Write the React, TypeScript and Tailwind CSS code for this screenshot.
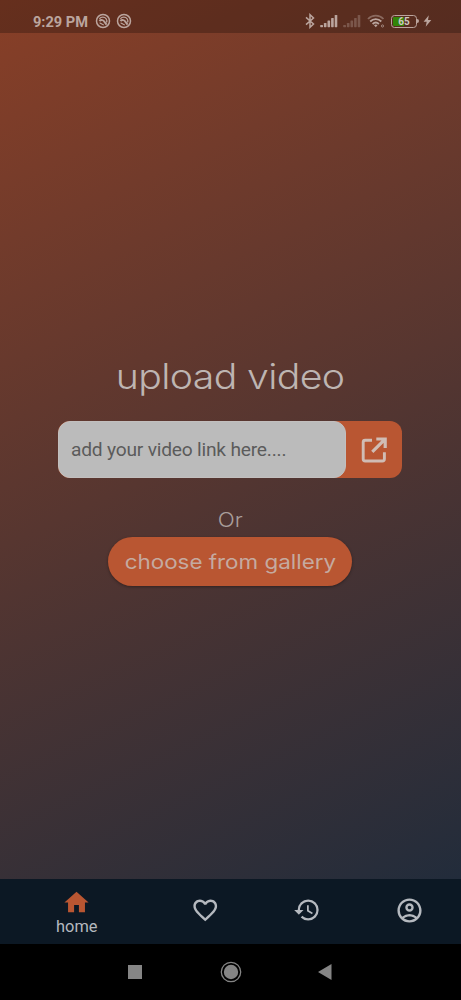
import React from "react";
import { MdHome, MdFavoriteBorder, MdHistory, MdOutlineAccountCircle } from "react-icons/md";

function NotificationIcon() {
  return (
    <svg viewBox="0 0 16 16" className="size-4" fill="none" stroke="currentColor">
      <circle cx="8" cy="8" r="6.5" strokeWidth="1.5" />
      <path d="M4.4 5.8C6 3.6 9.6 3.6 11.2 5.8C12 7 12 8.4 11.5 9.6" strokeWidth="1.2" />
      <path d="M4.4 8C6 6.4 8.6 7 9.4 8.8L11.6 11.6" strokeWidth="2" />
      <path d="M4.6 10.2C5.8 9.6 6.6 11.6 8.8 11.8" strokeWidth="1.2" />
    </svg>
  );
}

function Signal({ faded = false }: { faded?: boolean }) {
  return (
    <svg viewBox="0 0 18 14" className={faded ? "h-3.5 w-[18px] opacity-35" : "h-3.5 w-[18px]"} fill="currentColor">
      <rect x="0.2" y="11" width="2.8" height="2.2" rx="0.6" />
      <rect x="3.9" y="9" width="2.6" height="4.2" rx="0.6" />
      <rect x="7.5" y="6.5" width="2.6" height="6.7" rx="0.6" />
      <rect x="11.1" y="4" width="2.6" height="9.2" rx="0.6" />
      <rect x="14.7" y="1" width="2.6" height="12.2" rx="0.6" />
    </svg>
  );
}

function OpenLinkIcon() {
  return (
    <svg viewBox="0 0 28 28" className="size-7" fill="none" stroke="currentColor">
      <path d="M12 4.2H5.2Q3.2 4.2 3.2 6.2V23Q3.2 25 5.2 25H22.4Q24.4 25 24.4 23V16.2" strokeWidth="2.9" />
      <path d="M16.3 3H25.2V12M24.6 3.6L12.3 15.9" strokeWidth="3.2" />
    </svg>
  );
}

function StatusBar() {
  return (
    <header className="flex h-[33px] shrink-0 items-center bg-black/25 pt-[9px] pr-[29px] pl-[33px] text-[#bba59e]">
      <span className="w-[61.5px] pt-px text-[14.6px] leading-4 font-bold whitespace-nowrap">9:29 PM</span>
      <div className="flex gap-[5.5px]">
        <NotificationIcon />
        <NotificationIcon />
      </div>
      <div className="ml-auto flex items-center">
        <svg viewBox="0 0 10 16" className="mr-[5px] h-4 w-2.5" fill="none" stroke="currentColor" strokeWidth="1.5">
          <path d="M1 4.4L8.5 11L5 14.3V1.7L8.5 5L1 11.6" />
        </svg>
        <Signal />
        <div className="w-[5.5px]" />
        <Signal faded />
        <svg viewBox="0 0 18 14" className="ml-[5.5px] h-3.5 w-[18px]" fill="none" stroke="currentColor" strokeWidth="1.8">
          <path d="M1 5C5.2.6 12.3.6 16.5 5" opacity=".5" />
          <path d="M3.2 7.5C6.3 4.3 11.2 4.3 14.3 7.5" />
          <path d="M5.6 10C7.5 8.2 10 8.2 11.9 10" />
          <path d="M7 11.2L8.75 13.2L10.5 11.2C9.6 10.4 7.9 10.4 7 11.2Z" fill="currentColor" stroke="none" />
          <circle cx="15.5" cy="12" r="1.1" strokeWidth="1" opacity=".7" />
        </svg>
        <div className="ml-[6.5px] flex h-[13px] w-[26px] items-center rounded-[3.5px] border-[1.5px] border-current p-[1px]">
          <div className="flex h-full w-full items-center justify-center rounded-[1px] bg-linear-to-r from-[#328509] from-50% to-transparent to-50% pt-px text-[10px] leading-none font-bold text-[#d0c8c0]">
            65
          </div>
        </div>
        <div className="h-1 w-[2px] rounded-r-sm bg-current" />
        <svg viewBox="0 0 9 12" className="ml-[4px] h-3 w-[9px]" fill="currentColor">
          <path d="M5.8.3L.6 6.7H3.7L2.7 11.7L8.3 5.1H5Z" />
        </svg>
      </div>
    </header>
  );
}

export default function App() {
  return (
    <div className="flex h-[1000px] w-[461px] flex-col overflow-hidden bg-black font-['Roboto',sans-serif]">
      <div className="flex h-[879px] shrink-0 flex-col bg-[linear-gradient(155deg,#883f27_0%,#573630_50%,#222c3b_100%)]">
        <StatusBar />
        <main className="flex flex-col items-center pt-[320px] pr-px">
          <h1 className="flex h-[46px] origin-center scale-x-[1.12] items-center font-['Inter',sans-serif] text-[35px] leading-none font-light tracking-[-0.55px] whitespace-nowrap text-[#beb5b2]">
            upload video
          </h1>
          <div className="mt-[22px] flex h-[57px] w-[344px] rounded-[12px] bg-[#b95632]">
            <div className="flex w-[288px] items-center rounded-[12px] border border-[#c2bfbe] bg-[#bbbbbb] pt-0.5 pl-3 text-[19.2px] tracking-[-0.21px] whitespace-nowrap text-[#5b5b5b]">
              add your video link here....
            </div>
            <button className="flex flex-1 items-center justify-center text-[#d0bcb4]" aria-label="Open link">
              <OpenLinkIcon />
            </button>
          </div>
          <p className="mt-[27px] mb-[2px] flex h-[30px] scale-x-[1.12] items-center font-['Inter',sans-serif] text-[20px] leading-none font-light text-[#a99e9b]">Or</p>
          <button className="flex h-[49px] w-[244px] items-center justify-center rounded-full bg-[#b95632] shadow-[0_1px_3px_rgba(0,0,0,0.35)]">
            <span className="scale-x-[1.12] font-['Inter',sans-serif] text-[20px] whitespace-nowrap text-[#c5aaa0]">choose from gallery</span>
          </button>
        </main>
      </div>
      <nav className="grid h-[65px] shrink-0 grid-cols-[1.5fr_1fr_1fr_1fr] items-center bg-[#0c1824] text-[#b5b9bf]">
        <div className="flex h-full flex-col items-center pt-[9px]">
          <MdHome size={29} className="text-[#b95632]" />
          <span className="text-[16.4px] leading-[19px]">home</span>
        </div>
        <MdFavoriteBorder size={28.5} className="mx-auto mb-[3px]" />
        <MdHistory size={28} className="mx-auto mb-[3px]" />
        <MdOutlineAccountCircle size={29} className="mx-auto mb-[3px]" />
      </nav>
      <footer className="flex h-14 items-center pl-32 text-[#858585]">
        <div className="size-3.5 bg-current" />
        <svg viewBox="0 0 22 22" className="ml-[77.5px] size-[22px]" fill="currentColor">
          <circle cx="11" cy="11" r="9.7" fill="none" stroke="currentColor" strokeWidth="1.3" />
          <circle cx="11" cy="11" r="7.2" />
        </svg>
        <svg viewBox="0 0 14 16" className="ml-[76px] h-4 w-3.5" fill="currentColor">
          <path d="M13.5 0V16L0 8Z" />
        </svg>
      </footer>
    </div>
  );
}
